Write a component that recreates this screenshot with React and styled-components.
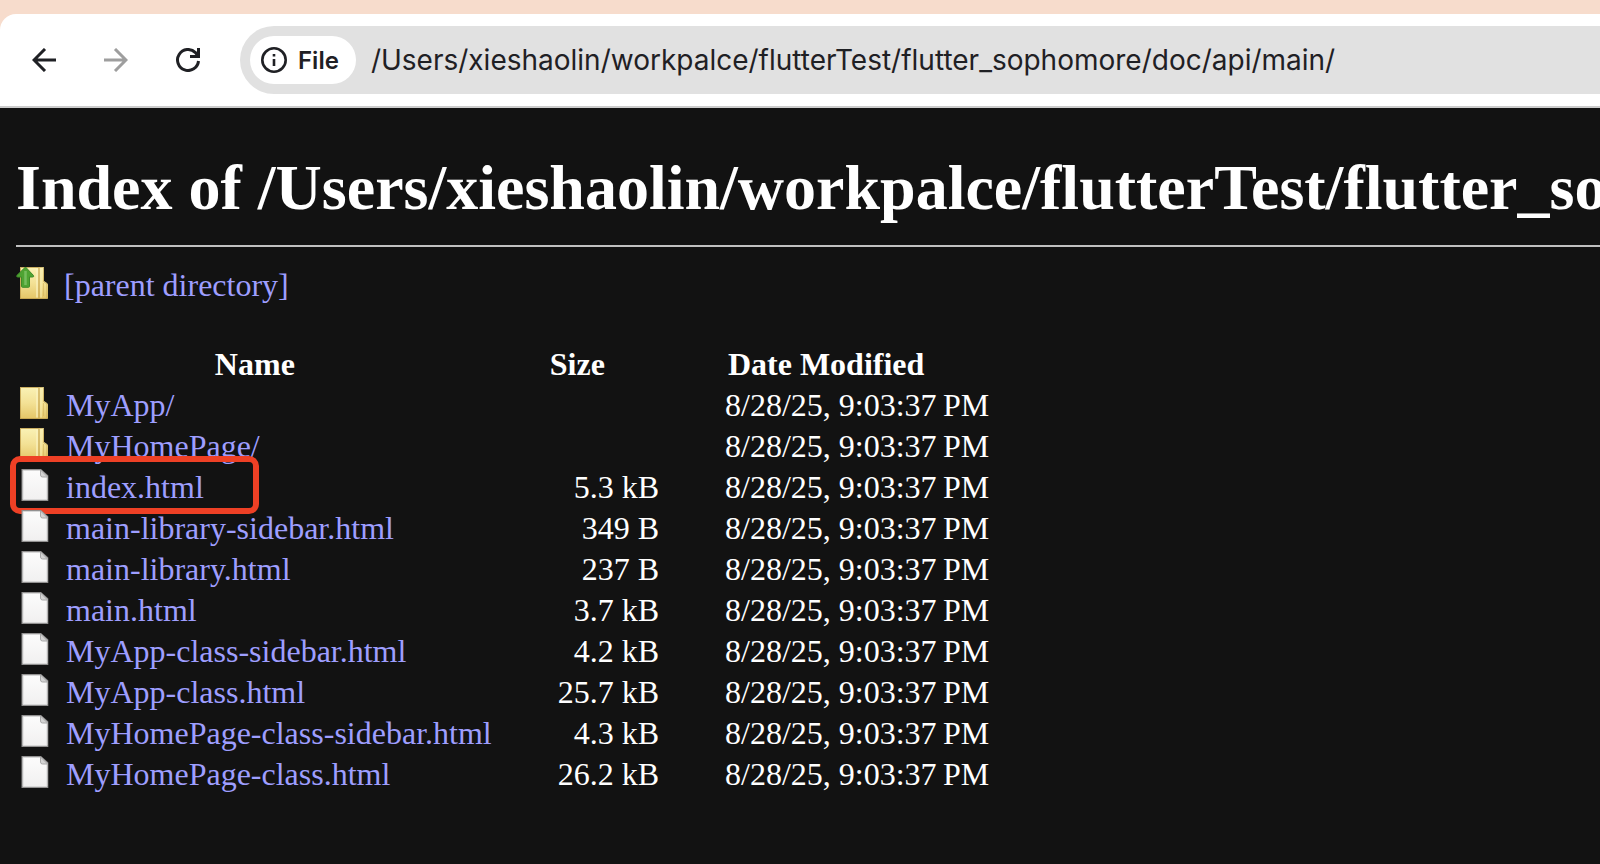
import React from 'react'
import styled, { createGlobalStyle } from 'styled-components'

const GlobalStyle = createGlobalStyle`
*{
  box-sizing: border-box;
}
body{
  margin: 0;
  background: #121212;
  color: #ffffff;
  font-family: "Liberation Serif", "Times New Roman", serif;
  font-size: 32px;
  line-height: 37px;
}
`

const TabStrip = styled.header`
background: #f7dccc;
padding-top: 14px;
`

const Toolbar = styled.nav`
display: flex;
align-items: center;
padding: 12px 0 12px 20px;
background: #ffffff;
border-bottom: 2px solid #cccccc;
border-top-left-radius: 16px;
`

const NavButton = styled.button`
display: flex;
align-items: center;
justify-content: center;
width: 48px;
height: 48px;
margin-right: 24px;
padding: 0;
border: 0;
background: transparent;
color: ${props => props.disabled ? '#9e9e9e' : '#1f2024'};
`

const AddressBar = styled.div`
flex: 1;
display: flex;
align-items: center;
gap: 15px;
height: 68px;
margin-left: 4px;
padding-left: 10px;
background: #e1e1e1;
border-radius: 34px 0 0 34px;
`

const FileChip = styled.button`
display: flex;
align-items: center;
gap: 10px;
height: 48px;
padding: 0 17px 0 10px;
border: 0;
border-radius: 24px;
background: #ffffff;
color: #1f2024;
font-family: Inter, sans-serif;
font-size: 24px;
font-weight: 600;
`

const UrlInput = styled.input`
flex: 1;
min-width: 0;
height: 48px;
padding: 0;
border: 0;
outline: 0;
background: transparent;
color: #1f2024;
font-family: Inter, sans-serif;
font-size: 28px;
`

const Page = styled.main`
padding-left: 16px;
`

const Title = styled.h1`
margin: 0 0 20px;
padding: 43px 0 20px;
border-bottom: 2px solid #c0c0c0;
font-size: 64px;
line-height: 74px;
font-weight: bold;
white-space: nowrap;
overflow: hidden;
`

const ParentBox = styled.div`
margin-bottom: 40px;
`

const EntryLink = styled.a`
display: flex;
gap: 16px;
color: #9e9eff;
text-decoration: none;

svg{
  flex: none;
}
`

const Listing = styled.table`
border-collapse: collapse;
white-space: nowrap;
`

const HeadCell = styled.th`
padding: 2px;
font-weight: bold;
text-align: center;
`

const NameCell = styled.td`
position: relative;
padding: 2px;
`

const DetailCell = styled.td`
padding: 2px 2px 2px 64px;
text-align: right;
`

// red box drawn over the entry to open
const Marker = styled.span`
position: absolute;
top: -11px;
left: -6px;
width: 249px;
height: 58px;
border: 6px solid #ee4025;
border-radius: 10px;
pointer-events: none;
`

const entries = [
  { name: 'MyApp/', dir: true },
  { name: 'MyHomePage/', dir: true },
  { name: 'index.html', size: '5.3 kB', marked: true },
  { name: 'main-library-sidebar.html', size: '349 B' },
  { name: 'main-library.html', size: '237 B' },
  { name: 'main.html', size: '3.7 kB' },
  { name: 'MyApp-class-sidebar.html', size: '4.2 kB' },
  { name: 'MyApp-class.html', size: '25.7 kB' },
  { name: 'MyHomePage-class-sidebar.html', size: '4.3 kB' },
  { name: 'MyHomePage-class.html', size: '26.2 kB' },
]

const path = '/Users/xieshaolin/workpalce/flutterTest/flutter_sophomore/doc/api/main/'
const modified = '8/28/25, 9:03:37\u202fPM'

const HiddenSvg = styled.svg`
position: absolute;
`

const Gradients = () => (
  <HiddenSvg width="0" height="0" aria-hidden="true">
    <defs>
      <linearGradient id="folder" x1="0" y1="0" x2="0" y2="1">
        <stop offset="0" stopColor="#faf2b6" />
        <stop offset="0.5" stopColor="#f3e195" />
        <stop offset="1" stopColor="#e4c566" />
      </linearGradient>
      <linearGradient id="paper" x1="0" y1="0" x2="0" y2="1">
        <stop offset="0" stopColor="#fcfcfc" />
        <stop offset="1" stopColor="#f1f0f0" />
      </linearGradient>
    </defs>
  </HiddenSvg>
)

const FolderShape = () => (
  <>
    <path d="M22 0h5q1 0 1 1v13l3 2q1 1 1 2v13q0 1-1 1h-9z" fill="url(#folder)" />
    <path d="M27.500 1v13.500l3.500 2.500v14.500H4.500V.5h22z" fill="none" stroke="#c1a251" strokeOpacity="0.700" />
    <path d="M4 1q0-1 1-1h18v32H5q-1 0-1-1z" fill="url(#folder)" />
    <path d="M23 31.500H4.500V.5H23" fill="none" stroke="#bf9f4e" strokeOpacity="0.800" />
    <path d="M21 1.500v29" stroke="#fbf4c6" strokeOpacity="0.800" strokeWidth="1.500" />
    <path d="M23 1v30.500" stroke="#c9a955" strokeWidth="1.300" />
    <path d="M25 1.500v29" stroke="#f9eeb2" strokeOpacity="0.700" strokeWidth="1.500" />
    <path d="M27.500 16v13" stroke="#d0b05b" strokeOpacity="0.600" />
  </>
)

const FolderIcon = () => (
  <svg width="32" height="32" viewBox="2 0 32 32" aria-hidden="true">
    <FolderShape />
  </svg>
)

const ParentIcon = () => (
  <svg width="32" height="32" viewBox="0 0 32 32" aria-hidden="true">
    <FolderShape />
    <path d="M9.500 0L.8 8.500q-.5 1.500 1 1.500H5.500v9.500q0 .8 1 .8h6q1 0 1-.8V10h3q1.800 0 1-1.500z" fill="#4ea332" stroke="#3f8a29" strokeLinejoin="round" />
    <path d="M9.500 4v14" stroke="#7fc368" strokeOpacity="0.800" strokeWidth="2.500" />
  </svg>
)

const FileIcon = () => (
  <svg width="32" height="32" viewBox="0 0 32 32" aria-hidden="true">
    <path d="M3.500 0h19.500l7.300 6.500V32H3.500z" fill="#929191" />
    <path d="M5 1.500h18L29 7.500v23H5z" fill="url(#paper)" stroke="#d8d8d8" />
    <path d="M22.500 1v5q0 2 2 2h5z" fill="#d4d4d4" stroke="#a8a8a8" />
  </svg>
)

const App = () => {
  return (
    <>
      <GlobalStyle />
      <Gradients />
      <TabStrip>
        <Toolbar aria-label="Browser">
          <NavButton aria-label="Back">
            <svg width="24" height="24" viewBox="0 0 24 24" fill="none" stroke="currentColor" strokeWidth="3">
              <path d="M24 12H2M13 1L2 12l11 11" />
            </svg>
          </NavButton>
          <NavButton aria-label="Forward" disabled>
            <svg width="24" height="24" viewBox="0 0 24 24" fill="none" stroke="currentColor" strokeWidth="3">
              <path d="M0 12h22M11 1l11 11-11 11" />
            </svg>
          </NavButton>
          <NavButton aria-label="Reload">
            <svg width="24" height="24" viewBox="0 0 24 24" fill="none" stroke="currentColor" strokeWidth="3">
              <path d="M22.500 13A10.500 10.500 0 1 1 19.500 4.600L22 8" />
              <path d="M22.500 0v8.500H14" />
            </svg>
          </NavButton>
          <AddressBar>
            <FileChip>
              <svg width="28" height="28" viewBox="0 0 28 28" fill="none" stroke="currentColor" strokeWidth="2.600" aria-hidden="true">
                <circle cx="14" cy="14" r="11.700" />
                <path d="M14 13v7M14 8v2.600" />
              </svg>
              File
            </FileChip>
            <UrlInput aria-label="Address" defaultValue={path} spellCheck={false} />
          </AddressBar>
        </Toolbar>
      </TabStrip>

      <Page>
        <Title>Index of {path}</Title>
        <ParentBox>
          <EntryLink href="#parent">
            <ParentIcon />
            [parent directory]
          </EntryLink>
        </ParentBox>
        <Listing>
          <thead>
            <tr>
              <HeadCell>Name</HeadCell>
              <HeadCell>Size</HeadCell>
              <HeadCell>Date Modified</HeadCell>
            </tr>
          </thead>
          <tbody>
            {entries.map(entry => (
              <tr key={entry.name}>
                <NameCell>
                  <EntryLink href={'#' + entry.name}>
                    {entry.dir ? <FolderIcon /> : <FileIcon />}
                    {entry.name}
                  </EntryLink>
                  {entry.marked && <Marker />}
                </NameCell>
                <DetailCell>{entry.size}</DetailCell>
                <DetailCell>{modified}</DetailCell>
              </tr>
            ))}
          </tbody>
        </Listing>
      </Page>
    </>
  )
}

export default App
